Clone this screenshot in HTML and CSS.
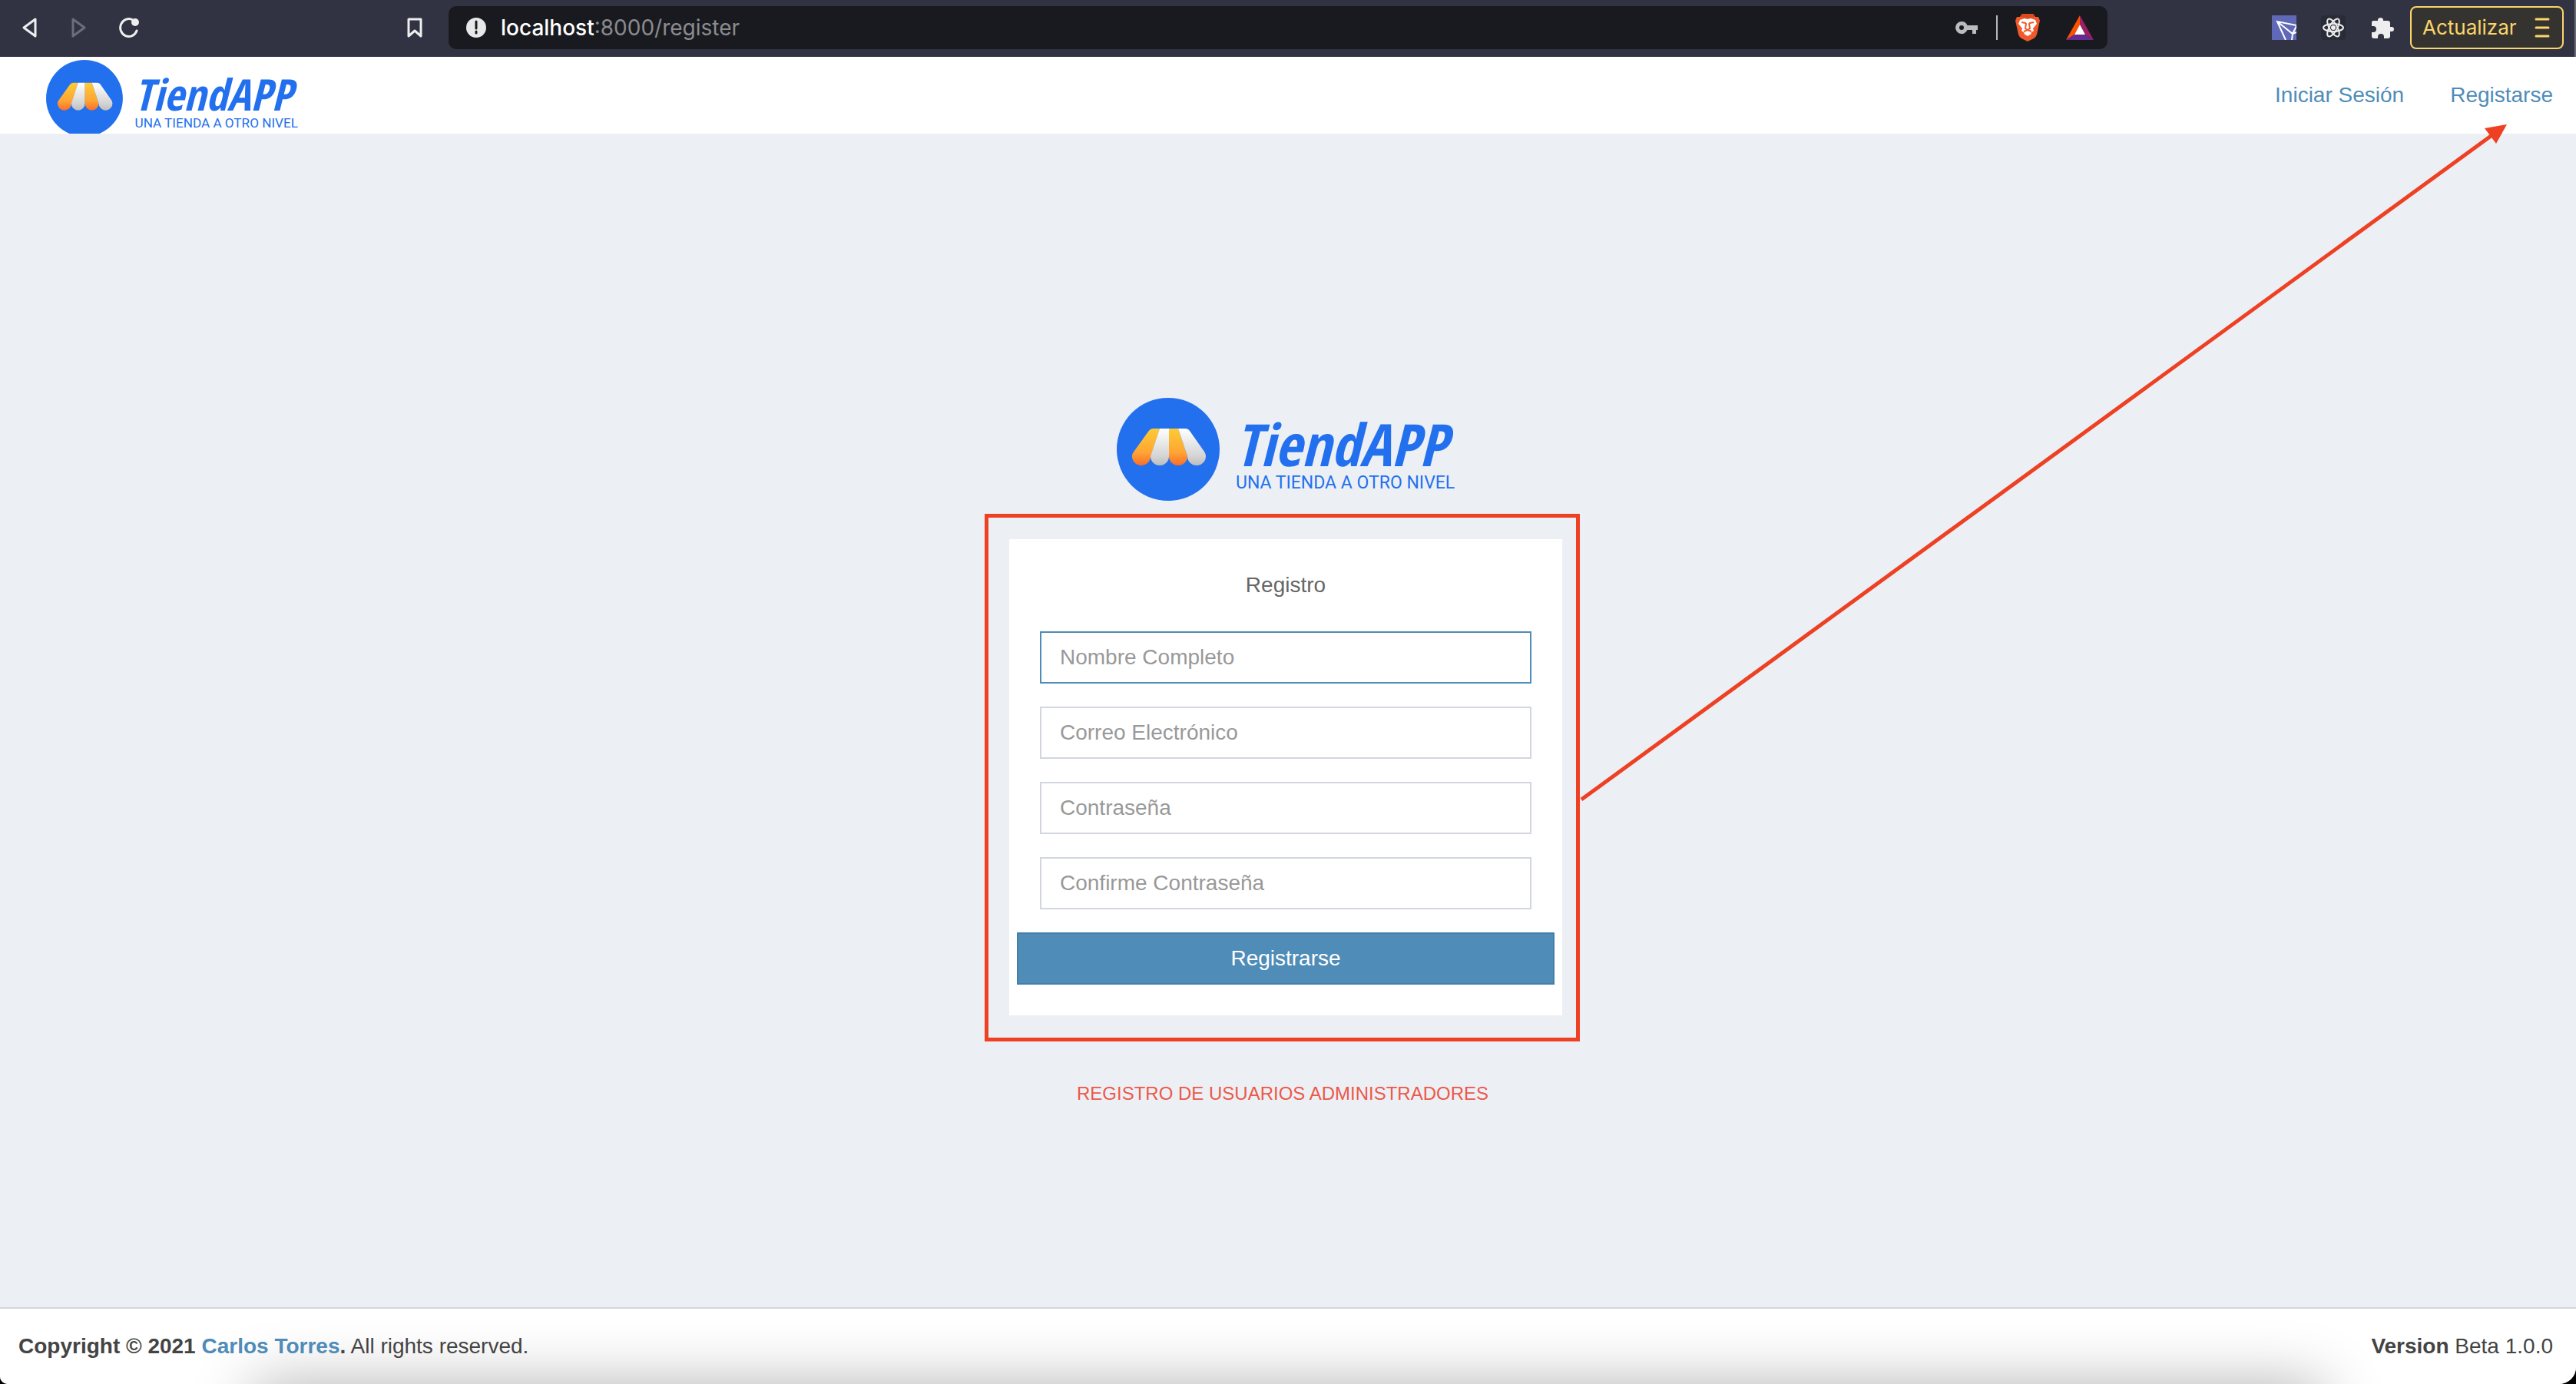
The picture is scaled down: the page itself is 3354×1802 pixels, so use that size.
FILE: index.html
```html
<!DOCTYPE html>
<html lang="es">
<head>
<meta charset="utf-8">
<title>TiendAPP - Registro</title>
<link rel="stylesheet" href="styles.css">
</head>
<body>
<svg class="defs" width="0" height="0" aria-hidden="true">
  <defs>
    <linearGradient id="orange" x1="0" y1="0" x2="0" y2="1">
      <stop offset="0" stop-color="#fdcb34"/><stop offset=".65" stop-color="#ffa534"/><stop offset="1" stop-color="#f96d2b"/>
    </linearGradient>
    <linearGradient id="silver" x1="0" y1="0" x2="0" y2="1">
      <stop offset="0" stop-color="#ffffff"/><stop offset=".75" stop-color="#d4d4d4"/><stop offset="1" stop-color="#bdbdbd"/>
    </linearGradient>
    <symbol id="logo" viewBox="0 0 440 134">
      <circle cx="67" cy="67" r="67" fill="#2370ee"/>
      <path d="M47 40H56L44 77A12 12 0 0 1 20 75Q20 73 23 69L41 44Q44 40 47 40Z" fill="url(#orange)"/>
      <path d="M56 40H68V76A12 12 0 0 1 44 76Z" fill="url(#silver)"/>
      <path d="M68 40H80L92 76A12 12 0 0 1 68 76Z" fill="url(#orange)"/>
      <path d="M80 40H89Q93 40 95 43L114 70Q116 73 116 76A12 12 0 0 1 92 76Z" fill="url(#silver)"/>
      <text class="logo-name" x="154" y="89">TiendAPP</text>
      <text class="logo-tag" x="155" y="118">UNA TIENDA A OTRO NIVEL</text>
    </symbol>
  </defs>
</svg>

<div class="browser">
  <div class="browser-nav">
    <button class="icon-btn" aria-label="Atrás"><svg width="24" height="28" viewBox="0 0 24 28"><path d="M20 3V25L5 14Z" fill="none" stroke="#eee" stroke-width="3" stroke-linejoin="round"/></svg></button>
    <button class="icon-btn" aria-label="Adelante"><svg width="24" height="28" viewBox="0 0 24 28"><path d="M5 3V25L20 14Z" fill="none" stroke="#6c6d78" stroke-width="3" stroke-linejoin="round"/></svg></button>
    <button class="icon-btn" aria-label="Recargar"><svg width="28" height="28" viewBox="0 0 28 28"><path d="M24 18A11 11.500 0 1 1 19 4" fill="none" stroke="#eee" stroke-width="3" stroke-linecap="round"/><circle cx="22" cy="7" r="5" fill="#eee"/></svg></button>
  </div>
  <button class="icon-btn bookmark" aria-label="Marcador"><svg width="20" height="28" viewBox="0 0 20 28"><path d="M2 3H18V25L10 18L2 25Z" fill="none" stroke="#eee" stroke-width="3" stroke-linejoin="round"/></svg></button>
  <div class="address">
    <svg width="28" height="28" viewBox="0 0 28 28"><circle cx="14" cy="14" r="13" fill="#e8e8e8"/><path d="M14 6V15M14 19V21" stroke="#191a1f" stroke-width="3" stroke-linecap="round"/></svg>
    <span class="url"><b>localhost</b>:8000/register</span>
    <svg class="key" width="30" height="20" viewBox="0 0 30 20"><path fill-rule="evenodd" d="M8 2A8 8 0 1 0 15.500 13H22V18H27V13H29V7H15.500A8 8 0 0 0 8 2ZM8 7A3 3 0 1 1 8 13A3 3 0 0 1 8 7Z" fill="#bcbcbe"/></svg>
    <span class="divider"></span>
    <svg class="brave" width="32" height="38" viewBox="0 0 32 38"><path d="M9 1H23L26 5L30 5L32 10L31 14L28 28Q27 31 24 33L16 37L8 33Q5 31 4 28L1 14L0 10L2 5L6 5Z" fill="#f1592a"/><path d="M9 1H23L26 5L16 7L6 5Z" fill="#d94a1d"/><path d="M6 9L12 7L16 8L20 7L26 9L28 14L23 20L24 23L20 26L21 27L16 30L11 27L12 26L8 23L9 20L4 14Z" fill="#fff"/><path d="M8 12L13 13L14 14L13 20L16 22L19 20L18 14L19 13L24 12M11 24L16 22L21 24" fill="none" stroke="#f1592a" stroke-width="2"/></svg>
    <svg width="36" height="34" viewBox="0 0 36 34"><path d="M18 1L0 33L11 26L18 13Z" fill="#ff5000"/><path d="M18 1L36 33L25 26L18 13Z" fill="#9e1f63"/><path d="M0 33H36L25 26H11Z" fill="#662d91"/><path d="M18 13L11 26H25Z" fill="#fff"/></svg>
  </div>
  <div class="extensions">
    <svg width="32" height="32" viewBox="0 0 32 32"><path d="M0 0H32V32H0Z" fill="#6068b8"/><path d="M32 13L7 8L18 32M7 8L27 24L32 22M27 24L32 14M27 24L26 32" fill="none" stroke="#fff" stroke-width="2"/></svg>
    <svg width="32" height="32" viewBox="0 0 32 32"><rect width="32" height="32" rx="4" fill="#292b36"/><g fill="none" stroke="#eee" stroke-width="2"><ellipse cx="16" cy="16" rx="13" ry="5"/><ellipse cx="16" cy="16" rx="13" ry="5" transform="rotate(60 16 16)"/><ellipse cx="16" cy="16" rx="13" ry="5" transform="rotate(120 16 16)"/></g><circle cx="16" cy="16" r="3" fill="#eee"/></svg>
    <svg width="32" height="32" viewBox="0 0 32 32"><path d="M4 7H10V5A4 4 0 0 1 17 5V7H23Q26 7 26 10V15H28A3 3 0 0 1 28 21H26V27Q26 30 23 30H18V28A4 4 0 0 0 10 28V30H5Q2 30 2 27V22H4A4 4 0 0 0 4 14H2V10Q2 7 4 7Z" fill="#eee"/></svg>
  </div>
  <button class="update">Actualizar <svg width="20" height="28" viewBox="0 0 20 28"><path d="M2 3H18M2 14H18M2 25H18" stroke="#fbd56b" stroke-width="3" stroke-linecap="round"/></svg></button>
</div>

<div class="page">
  <header class="topbar">
    <a class="brand" href="#" aria-label="TiendAPP"><svg width="328" height="100"><use href="#logo"/></svg></a>
    <nav class="links"><a href="#">Iniciar Sesión</a><a href="#">Registarse</a></nav>
  </header>
  <main class="content">
    <svg class="main-logo" width="440" height="134"><use href="#logo"/></svg>
    <form class="card">
      <p class="card-title">Registro</p>
      <input class="field active" type="text" placeholder="Nombre Completo" aria-label="Nombre Completo">
      <input class="field" type="email" placeholder="Correo Electrónico" aria-label="Correo Electrónico">
      <input class="field" type="password" placeholder="Contraseña" aria-label="Contraseña">
      <input class="field" type="password" placeholder="Confirme Contraseña" aria-label="Confirme Contraseña">
      <button class="submit" type="button">Registrarse</button>
    </form>
    <p class="caption">REGISTRO DE USUARIOS ADMINISTRADORES</p>
  </main>
  <footer class="footer">
    <span><strong>Copyright © 2021 <a href="#">Carlos Torres</a>.</strong> All rights reserved.</span>
    <span><strong>Version</strong> Beta 1.0.0</span>
  </footer>
</div>
<svg class="arrow" viewBox="0 0 3354 1802" aria-hidden="true"><path d="M2059 1041L3246 175" stroke="#ee4023" stroke-width="5"/><path d="M3264 162L3235 167L3250 187Z" fill="#ee4023"/></svg>
</body>
</html>
```
FILE: styles.css
```css
* { box-sizing: border-box; }
html { background: #000; }
body {
  position: relative;
  display: flex;
  flex-direction: column;
  min-height: 100vh;
  margin: 0;
  font: 28px/40px "Liberation Sans", Arial, sans-serif;
  color: #444;
}
a { color: #4f8cb8; text-decoration: none; }
button { font: inherit; cursor: pointer; }
svg { display: block; flex: none; }
.defs { position: absolute; }
.logo-name { font: italic bold 76px "Liberation Sans Narrow", "Open Sans Condensed", Lato, sans-serif; fill: #2370ee; }
.logo-tag { font: 400 23px Roboto, sans-serif; fill: #2370ee; }

.browser {
  display: flex;
  align-items: center;
  height: 74px;
  padding: 0 14px 2px 26px;
  border-right: 2px solid #6a6b75;
  background: #313342;
  font-family: Inter, sans-serif;
}
.browser-nav { display: flex; gap: 40px; }
.icon-btn { padding: 0; border: 0; background: none; }
.bookmark { margin-left: 348px; margin-right: 34px; }
.address {
  display: flex;
  flex: 1;
  align-items: center;
  height: 56px;
  padding: 0 18px 0 22px;
  border-radius: 10px;
  background: #191a1f;
}
.url { flex: 1; margin-left: 18px; font-size: 28px; color: #8b8b8f; }
.url b { font-weight: 500; color: #fff; }
.divider { width: 2px; height: 32px; margin: 0 23px; background: #b8b8ba; }
.brave { margin-right: 34px; }
.extensions { display: flex; gap: 32px; margin-left: 214px; margin-right: 20px; }
.update {
  display: flex;
  align-items: center;
  justify-content: space-between;
  width: 200px;
  height: 56px;
  padding: 0 16px 0 14px;
  border: 2px solid #fbd56b;
  border-radius: 8px;
  background: #353330;
  color: #fbd56b;
  font-size: 26px;
}

.page {
  display: flex;
  flex: 1;
  flex-direction: column;
  overflow: hidden;
  border-radius: 0 0 22px 10px;
  background: #ecf0f5;
}
.topbar {
  display: flex;
  justify-content: space-between;
  height: 100px;
  padding: 0 30px 0 60px;
  background: #fff;
}
.brand { padding-top: 4px; overflow: hidden; }
.links { display: flex; gap: 60px; padding-top: 30px; }

.content {
  display: flex;
  flex: 1;
  flex-direction: column;
  align-items: center;
  justify-content: center;
  padding: 86px 6px 0 0;
}
.main-logo { margin-bottom: 50px; }
.card {
  position: relative;
  display: flex;
  flex-direction: column;
  gap: 30px;
  width: 720px;
  padding: 40px 10px;
  background: #fff;
}
.card::after {
  content: "";
  position: absolute;
  inset: -33px -23px -34px -32px;
  border: 5px solid #ee4023;
  pointer-events: none;
}
.card-title { margin: 0 0 10px; text-align: center; color: #666; }
.field {
  height: 68px;
  margin: 0 30px;
  padding: 0 24px;
  border: 2px solid #d2d6de;
  font: inherit;
  color: #555;
}
.field::placeholder { color: #999; opacity: 1; }
.field.active { border-color: #4f8cb8; }
.submit {
  height: 68px;
  border: 2px solid #437fa9;
  background: #4f8cb8;
  color: #fff;
}
.caption { margin: 82px 8px 0 0; font-size: 24px; color: #ec5849; }

.footer {
  position: relative;
  display: flex;
  justify-content: space-between;
  padding: 29px 30px 29px 24px;
  border-top: 2px solid #d2d6de;
  background: #fff;
}
.footer span { position: relative; z-index: 1; }
.footer::after {
  content: "";
  position: absolute;
  top: 100%;
  left: 340px;
  right: 340px;
  height: 80px;
  box-shadow: 0 10px 80px 10px rgba(0, 0, 0, .3);
}
.arrow { position: absolute; top: 0; left: 0; width: 100%; pointer-events: none; }
```
